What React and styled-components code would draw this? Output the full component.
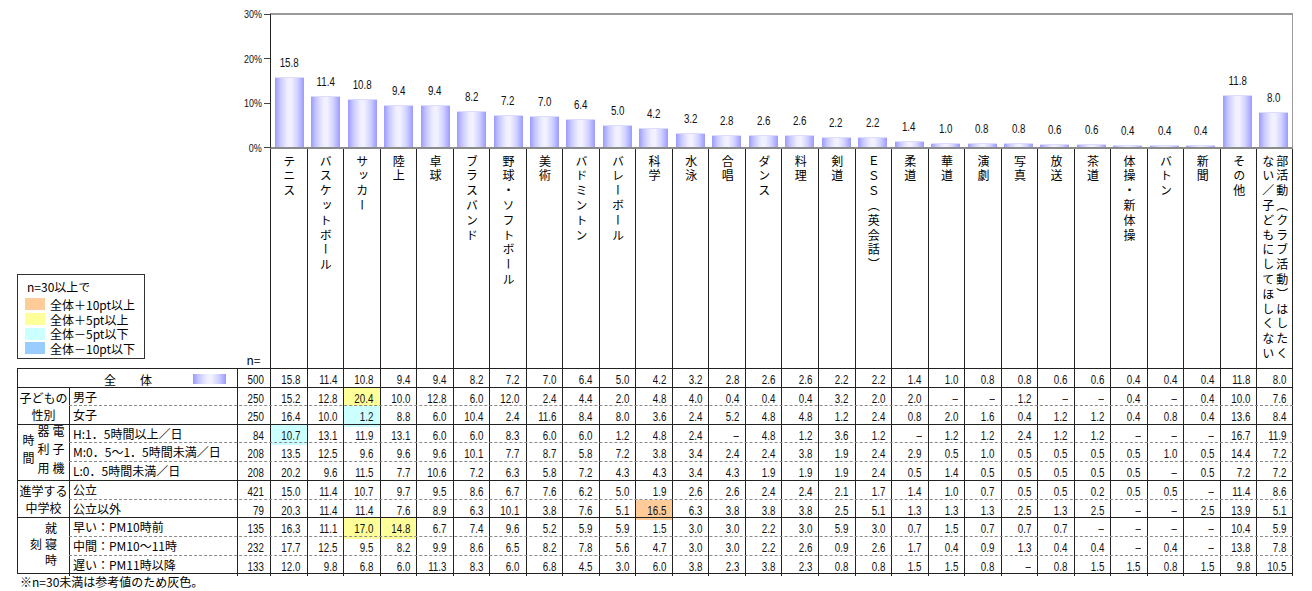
import React from "react";
import styled, { createGlobalStyle } from "styled-components";

// Bar chart + crosstab of club activities (percent, n = respondents)

const JP_FONT = `"Noto Sans CJK JP", "Noto Sans", sans-serif`;
const NUM_FONT = `"Liberation Sans", Arial, sans-serif`;
const GRID = "220px 33px repeat(28, 1fr)";
const LINE = "#222";
const BAR_BG =
  "linear-gradient(to right, #9a9aff 0%, #c8c8ff 18%, #eeeeff 42%, #f2f2ff 55%, #d0d0ff 78%, #9a9aff 100%)";

const MARKS = {
  up10: "#ffcc99",
  up5: "#ffff99",
  down5: "#ccffff",
  down10: "#99ccff",
};

const clubs = [
  "テニス",
  "バスケットボール",
  "サッカー",
  "陸上",
  "卓球",
  "ブラスバンド",
  "野球・ソフトボール",
  "美術",
  "バドミントン",
  "バレーボール",
  "科学",
  "水泳",
  "合唱",
  "ダンス",
  "料理",
  "剣道",
  "ＥＳＳ（英会話）",
  "柔道",
  "華道",
  "演劇",
  "写真",
  "放送",
  "茶道",
  "体操・新体操",
  "バトン",
  "新聞",
  "その他",
  "部活動（クラブ活動）はしたく\nない／子どもにしてほしくない",
];

const overall = [
  15.8, 11.4, 10.8, 9.4, 9.4, 8.2, 7.2, 7.0, 6.4, 5.0, 4.2, 3.2, 2.8, 2.6, 2.6,
  2.2, 2.2, 1.4, 1.0, 0.8, 0.8, 0.6, 0.6, 0.4, 0.4, 0.4, 11.8, 8.0,
];

const _ = null;

const groups = [
  {
    lines: ["子どもの", "性別"],
    rows: [
      {
        name: "男子",
        n: 250,
        values: [15.2, 12.8, 20.4, 10.0, 12.8, 6.0, 12.0, 2.4, 4.4, 2.0, 4.8, 4.0, 0.4, 0.4, 0.4, 3.2, 2.0, 2.0, _, _, 1.2, _, _, 0.4, _, 0.4, 10.0, 7.6],
        marks: { 2: "up5" },
      },
      {
        name: "女子",
        n: 250,
        values: [16.4, 10.0, 1.2, 8.8, 6.0, 10.4, 2.4, 11.6, 8.4, 8.0, 3.6, 2.4, 5.2, 4.8, 4.8, 1.2, 2.4, 0.8, 2.0, 1.6, 0.4, 1.2, 1.2, 0.4, 0.8, 0.4, 13.6, 8.4],
        marks: { 2: "down5" },
      },
    ],
  },
  {
    vertical: ["電子機", "器利用", "時間"],
    spacing: 6.5,
    rows: [
      {
        name: "H:1．5時間以上／日",
        n: 84,
        values: [10.7, 13.1, 11.9, 13.1, 6.0, 6.0, 8.3, 6.0, 6.0, 1.2, 4.8, 2.4, _, 4.8, 1.2, 3.6, 1.2, _, 1.2, 1.2, 2.4, 1.2, 1.2, _, _, _, 16.7, 11.9],
        marks: { 0: "down5" },
      },
      {
        name: "M:0．5～1．5時間未満／日",
        n: 208,
        values: [13.5, 12.5, 9.6, 9.6, 9.6, 10.1, 7.7, 8.7, 5.8, 7.2, 3.8, 3.4, 2.4, 2.4, 3.8, 1.9, 2.4, 2.9, 0.5, 1.0, 0.5, 0.5, 0.5, 0.5, 1.0, 0.5, 14.4, 7.2],
      },
      {
        name: "L:0．5時間未満／日",
        n: 208,
        values: [20.2, 9.6, 11.5, 7.7, 10.6, 7.2, 6.3, 5.8, 7.2, 4.3, 4.3, 3.4, 4.3, 1.9, 1.9, 1.9, 2.4, 0.5, 1.4, 0.5, 0.5, 0.5, 0.5, 0.5, _, 0.5, 7.2, 7.2],
      },
    ],
  },
  {
    lines: ["進学する", "中学校"],
    rows: [
      {
        name: "公立",
        n: 421,
        values: [15.0, 11.4, 10.7, 9.7, 9.5, 8.6, 6.7, 7.6, 6.2, 5.0, 1.9, 2.6, 2.6, 2.4, 2.4, 2.1, 1.7, 1.4, 1.0, 0.7, 0.5, 0.5, 0.2, 0.5, 0.5, _, 11.4, 8.6],
      },
      {
        name: "公立以外",
        n: 79,
        values: [20.3, 11.4, 11.4, 7.6, 8.9, 6.3, 10.1, 3.8, 7.6, 5.1, 16.5, 6.3, 3.8, 3.8, 3.8, 2.5, 5.1, 1.3, 1.3, 1.3, 2.5, 1.3, 2.5, _, _, 2.5, 13.9, 5.1],
        marks: { 10: "up10" },
      },
    ],
  },
  {
    vertical: ["就寝時", "刻"],
    spacing: 4,
    rows: [
      {
        name: "早い：PM10時前",
        n: 135,
        values: [16.3, 11.1, 17.0, 14.8, 6.7, 7.4, 9.6, 5.2, 5.9, 5.9, 1.5, 3.0, 3.0, 2.2, 3.0, 5.9, 3.0, 0.7, 1.5, 0.7, 0.7, 0.7, _, _, _, _, 10.4, 5.9],
        marks: { 2: "up5", 3: "up5" },
      },
      {
        name: "中間：PM10～11時",
        n: 232,
        values: [17.7, 12.5, 9.5, 8.2, 9.9, 8.6, 6.5, 8.2, 7.8, 5.6, 4.7, 3.0, 3.0, 2.2, 2.6, 0.9, 2.6, 1.7, 0.4, 0.9, 1.3, 0.4, 0.4, _, 0.4, _, 13.8, 7.8],
      },
      {
        name: "遅い：PM11時以降",
        n: 133,
        values: [12.0, 9.8, 6.8, 6.0, 11.3, 8.3, 6.0, 6.8, 4.5, 3.0, 6.0, 3.8, 2.3, 3.8, 2.3, 0.8, 0.8, 1.5, 1.5, 0.8, _, 0.8, 1.5, 1.5, 0.8, 1.5, 9.8, 10.5],
      },
    ],
  },
];

const legend = [
  { key: "up10", text: "全体＋10pt以上" },
  { key: "up5", text: "全体＋5pt以上" },
  { key: "down5", text: "全体－5pt以下" },
  { key: "down10", text: "全体－10pt以下" },
];

const fmt = (v) => (v === null ? "–" : v.toFixed(1));

function App() {
  return (
    <>
      <GlobalStyle />
      <Page>
        <ChartRow>
          <YAxis>
            {["30%", "20%", "10%", "0%"].map((t) => (
              <Tick key={t}>
                <Digits $origin="right">{t}</Digits>
              </Tick>
            ))}
          </YAxis>
          <Plot>
            {overall.map((v, i) => (
              <BarSlot key={i}>
                <ValueLabel>
                  <Digits $origin="center">{fmt(v)}</Digits>
                </ValueLabel>
                <Bar style={{ height: `${(v / 30) * 133}px` }} />
              </BarSlot>
            ))}
          </Plot>
        </ChartRow>

        <HeaderRow>
          <LegendCell>
            <Legend>
              <LegendTitle>n=30以上で</LegendTitle>
              {legend.map((l) => (
                <LegendItem key={l.key}>
                  <Swatch $color={MARKS[l.key]} />
                  {l.text}
                </LegendItem>
              ))}
            </Legend>
          </LegendCell>
          <NCell>n=</NCell>
          {clubs.map((c) => (
            <ClubCell key={c}>
              <ClubLabel>{c}</ClubLabel>
            </ClubCell>
          ))}
        </HeaderRow>

        <Table>
          <TotalRow>
            <TotalLabel>
              <span>全　　体</span>
              <TotalSwatch />
            </TotalLabel>
            <NumCell>
              <Digits>500</Digits>
            </NumCell>
            {overall.map((v, i) => (
              <NumCell key={i}>
                <Digits>{fmt(v)}</Digits>
              </NumCell>
            ))}
          </TotalRow>

          {groups.map((g, gi) => (
            <Group key={gi}>
              <CategoryCell>
                {g.vertical ? (
                  <VerticalLabel $spacing={g.spacing}>
                    {g.vertical.map((l, li) => (
                      <React.Fragment key={li}>
                        {li > 0 && <br />}
                        {l}
                      </React.Fragment>
                    ))}
                  </VerticalLabel>
                ) : (
                  g.lines.map((l) => <span key={l}>{l}</span>)
                )}
              </CategoryCell>
              <Rows>
                {g.rows.map((r) => (
                  <Row key={r.name}>
                    <LabelCell>{r.name}</LabelCell>
                    <NumCell>
                      <Digits>{r.n}</Digits>
                    </NumCell>
                    {r.values.map((v, i) => (
                      <NumCell
                        key={i}
                        $bg={r.marks && r.marks[i] ? MARKS[r.marks[i]] : null}
                      >
                        <Digits>{fmt(v)}</Digits>
                      </NumCell>
                    ))}
                  </Row>
                ))}
              </Rows>
            </Group>
          ))}
        </Table>
        <Note>※n=30未満は参考値のため灰色。</Note>
      </Page>
    </>
  );
}

export default App;

// Styled Components
const GlobalStyle = createGlobalStyle`
  * { box-sizing: border-box; }
  body {
    margin: 0;
    background: #ffffff;
    color: #000;
    font-family: ${JP_FONT};
  }
`;

const Page = styled.div`
  box-sizing: content-box;
  width: 1276px;
  padding: 13px 0 0 17px;
`;

/* narrow, tall digits like the spreadsheet's bitmap font */
const Digits = styled.span`
  display: inline-block;
  font-family: ${NUM_FONT};
  font-size: 12.5px;
  color: #111;
  transform: scaleX(0.78);
  transform-origin: ${(p) => p.$origin || "right"} center;
`;

const ChartRow = styled.div`
  display: grid;
  grid-template-columns: 253px 1fr;
`;

const YAxis = styled.div`
  height: 136px;
  padding: 1px 0;
  display: flex;
  flex-direction: column;
  justify-content: space-between;
  align-items: flex-end;
`;

const Tick = styled.div`
  height: 0;
  display: flex;
  align-items: center;
  gap: 2px;

  ${Digits} {
    font-size: 11.5px;
  }

  &::after {
    content: "";
    width: 6px;
    height: 1px;
    background: #444;
  }
`;

const Plot = styled.div`
  height: 136px;
  display: grid;
  grid-template-columns: repeat(28, 1fr);
  align-items: end;
  border-left: 1px solid ${LINE};
  border-top: 2px solid #9a9a9a;
  border-right: 1px solid #9a9a9a;
  border-bottom: 2px solid #8a8a8a;
`;

const BarSlot = styled.div`
  height: 100%;
  display: flex;
  flex-direction: column;
  align-items: center;
  justify-content: flex-end;
`;

const ValueLabel = styled.div`
  line-height: 12px;
  margin-bottom: 8px;
  white-space: nowrap;
`;

const Bar = styled.div`
  width: 29px;
  min-height: 2px;
  background: ${BAR_BG};
  box-shadow: inset 0 1px 0 #dcdcff;
`;

const HeaderRow = styled.div`
  display: grid;
  grid-template-columns: ${GRID};
  height: 219px;
`;

const LegendCell = styled.div`
  display: flex;
  align-items: flex-end;
  padding-bottom: 9px;
`;

const Legend = styled.div`
  width: 128px;
  height: 85px;
  border: 1px solid #333;
  padding: 5px 0 0 7px;
  font-size: 12px;
`;

const LegendTitle = styled.div`
  line-height: 14px;
  padding-left: 2px;
  margin-bottom: 3px;
`;

const LegendItem = styled.div`
  display: flex;
  align-items: center;
  gap: 5px;
  height: 14.7px;
  white-space: nowrap;
`;

const Swatch = styled.span`
  width: 20px;
  height: 12px;
  background: ${(p) => p.$color};
`;

const NCell = styled.div`
  display: flex;
  align-items: flex-end;
  justify-content: center;
  padding-bottom: 1px;
  font-size: 12px;
  line-height: 14px;
`;

const ClubCell = styled.div`
  display: flex;
  justify-content: center;
  padding-top: 6px;
  border-left: 1px solid ${LINE};

  &:last-child {
    border-right: 1px solid ${LINE};
  }
`;

const ClubLabel = styled.div`
  writing-mode: vertical-rl;
  font-size: 12px;
  line-height: 14px;
  letter-spacing: 2.8px;
  white-space: pre-line;
`;

const Table = styled.div`
  display: flex;
  flex-direction: column;
`;

const TotalRow = styled.div`
  display: grid;
  grid-template-columns: ${GRID};
  height: 18.6px;
  border-top: 1px solid ${LINE};
`;

const TotalLabel = styled.div`
  display: flex;
  align-items: center;
  gap: 41px;
  padding-left: 86px;
  border-left: 1px solid ${LINE};
  font-size: 12px;
`;

const TotalSwatch = styled.span`
  width: 33px;
  height: 10px;
  background: ${BAR_BG};
`;

const Group = styled.div`
  display: grid;
  grid-template-columns: 52px 1fr;
  border-top: 1px solid ${LINE};

  &:last-child {
    border-bottom: 1px solid ${LINE};
  }
`;

const CategoryCell = styled.div`
  display: flex;
  flex-direction: column;
  align-items: center;
  justify-content: center;
  border-left: 1px solid ${LINE};
  font-size: 12px;
  line-height: 17px;
  white-space: nowrap;
`;

const VerticalLabel = styled.div`
  writing-mode: vertical-rl;
  text-align: center;
  line-height: 15px;
  letter-spacing: ${(p) => p.$spacing}px;
`;

const Rows = styled.div`
  display: flex;
  flex-direction: column;
`;

const Row = styled.div`
  box-sizing: content-box;
  display: grid;
  grid-template-columns: 168px 33px repeat(28, 1fr);
  height: 17.6px;

  & + & {
    border-top: 1px dashed #8a8a8a;
  }
`;

const LabelCell = styled.div`
  border-left: 1px solid ${LINE};
  padding-left: 3px;
  font-size: 12px;
  line-height: 17.6px;
  white-space: nowrap;
  overflow: hidden;
`;

const NumCell = styled.div`
  border-left: 1px solid ${LINE};
  background: ${(p) => p.$bg || "transparent"};
  text-align: right;
  padding-right: 6px;
  line-height: 17.6px;
  white-space: nowrap;

  &:last-child {
    border-right: 1px solid ${LINE};
  }
`;

const Note = styled.div`
  padding: 1px 0 0 3px;
  font-size: 12px;
  line-height: 14px;
`;
